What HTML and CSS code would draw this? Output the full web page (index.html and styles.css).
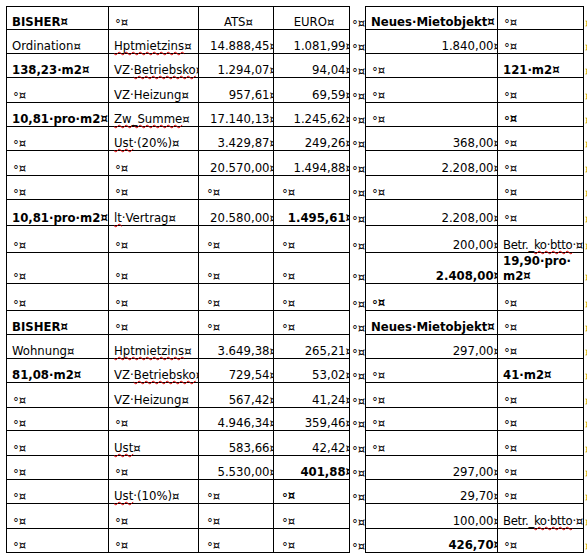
FILE: index.html
```html
<!DOCTYPE html>
<html lang="de">
<head>
<meta charset="utf-8">
<title>Mietvergleich</title>
<link rel="stylesheet" href="styles.css">
</head>
<body>
<table class="grid">
<colgroup>
<col class="c1"><col class="c2"><col class="c3"><col class="c4"><col class="c5"><col class="c6"><col class="c7"><col class="c8">
</colgroup>
<tbody>
<tr class="h23">
<td class="b">BISHER<span class="m">¤</span></td>
<td><span class="e">°</span><span class="m">¤</span></td>
<td class="c">ATS<span class="m">¤</span></td>
<td class="c">EURO<span class="m">¤</span></td>
<td class="n"><span class="e">°</span><span class="m">¤</span></td>
<td class="b">Neues·Mietobjekt<span class="m">¤</span></td>
<td><span class="e">°</span><span class="m">¤</span></td>
<td class="x">¤</td>
</tr>
<tr class="h24">
<td>Ordination<span class="m">¤</span></td>
<td><span class="sp">Hptmietzins</span><span class="m">¤</span></td>
<td class="r">14.888,45<span class="m">¤</span></td>
<td class="r">1.081,99<span class="m">¤</span></td>
<td class="n"><span class="e">°</span><span class="m">¤</span></td>
<td class="r">1.840,00<span class="m">¤</span></td>
<td><span class="e">°</span><span class="m">¤</span></td>
<td class="x">¤</td>
</tr>
<tr class="h24">
<td class="b">138,23·m2<span class="m">¤</span></td>
<td>VZ·<span class="sp">Betriebsko</span><span class="m">¤</span></td>
<td class="r">1.294,07<span class="m">¤</span></td>
<td class="r">94,04<span class="m">¤</span></td>
<td class="n"><span class="e">°</span><span class="m">¤</span></td>
<td><span class="e">°</span><span class="m">¤</span></td>
<td class="b">121·m2<span class="m">¤</span></td>
<td class="x">¤</td>
</tr>
<tr class="h25">
<td><span class="e">°</span><span class="m">¤</span></td>
<td>VZ·Heizung<span class="m">¤</span></td>
<td class="r">957,61<span class="m">¤</span></td>
<td class="r">69,59<span class="m">¤</span></td>
<td class="n"><span class="e">°</span><span class="m">¤</span></td>
<td><span class="e">°</span><span class="m">¤</span></td>
<td><span class="e">°</span><span class="m">¤</span></td>
<td class="x">¤</td>
</tr>
<tr class="h24">
<td class="b">10,81·pro·m2<span class="m">¤</span></td>
<td><span class="sp">Zw_Summe</span><span class="m">¤</span></td>
<td class="r">17.140,13<span class="m">¤</span></td>
<td class="r">1.245,62<span class="m">¤</span></td>
<td class="n"><span class="e">°</span><span class="m">¤</span></td>
<td><span class="e">°</span><span class="m">¤</span></td>
<td class="b"><span class="e">°</span><span class="m">¤</span></td>
<td class="x">¤</td>
</tr>
<tr class="h24">
<td><span class="e">°</span><span class="m">¤</span></td>
<td><span class="sp">Ust</span>·(20%)<span class="m">¤</span></td>
<td class="r">3.429,87<span class="m">¤</span></td>
<td class="r">249,26<span class="m">¤</span></td>
<td class="n"><span class="e">°</span><span class="m">¤</span></td>
<td class="r">368,00<span class="m">¤</span></td>
<td><span class="e">°</span><span class="m">¤</span></td>
<td class="x">¤</td>
</tr>
<tr class="h25">
<td><span class="e">°</span><span class="m">¤</span></td>
<td><span class="e">°</span><span class="m">¤</span></td>
<td class="r">20.570,00<span class="m">¤</span></td>
<td class="r">1.494,88<span class="m">¤</span></td>
<td class="n"><span class="e">°</span><span class="m">¤</span></td>
<td class="r">2.208,00<span class="m">¤</span></td>
<td><span class="e">°</span><span class="m">¤</span></td>
<td class="x">¤</td>
</tr>
<tr class="h24">
<td><span class="e">°</span><span class="m">¤</span></td>
<td><span class="e">°</span><span class="m">¤</span></td>
<td class="p"><span class="e">°</span><span class="m">¤</span></td>
<td class="p"><span class="e">°</span><span class="m">¤</span></td>
<td class="n"><span class="e">°</span><span class="m">¤</span></td>
<td><span class="e">°</span><span class="m">¤</span></td>
<td><span class="e">°</span><span class="m">¤</span></td>
<td class="x">¤</td>
</tr>
<tr class="h26">
<td class="b">10,81·pro·m2<span class="m">¤</span></td>
<td><span class="sp">lt</span>·Vertrag<span class="m">¤</span></td>
<td class="r">20.580,00<span class="m">¤</span></td>
<td class="r b">1.495,61<span class="m">¤</span></td>
<td class="n"><span class="e">°</span><span class="m">¤</span></td>
<td class="r">2.208,00<span class="m">¤</span></td>
<td><span class="e">°</span><span class="m">¤</span></td>
<td class="x">¤</td>
</tr>
<tr class="h27">
<td><span class="e">°</span><span class="m">¤</span></td>
<td><span class="e">°</span><span class="m">¤</span></td>
<td class="p"><span class="e">°</span><span class="m">¤</span></td>
<td class="p"><span class="e">°</span><span class="m">¤</span></td>
<td class="n"><span class="e">°</span><span class="m">¤</span></td>
<td class="r">200,00<span class="m">¤</span></td>
<td class="t">Betr._<span class="sp">ko·btto</span>·<span class="m">¤</span></td>
<td class="x">¤</td>
</tr>
<tr class="h30">
<td><span class="e">°</span><span class="m">¤</span></td>
<td><span class="e">°</span><span class="m">¤</span></td>
<td class="p"><span class="e">°</span><span class="m">¤</span></td>
<td class="p"><span class="e">°</span><span class="m">¤</span></td>
<td class="n"><span class="e">°</span><span class="m">¤</span></td>
<td class="r b">2.408,00<span class="m">¤</span></td>
<td class="b wrap">19,90·pro· m2<span class="m">¤</span></td>
<td class="x">¤</td>
</tr>
<tr class="h27">
<td><span class="e">°</span><span class="m">¤</span></td>
<td><span class="e">°</span><span class="m">¤</span></td>
<td class="p"><span class="e">°</span><span class="m">¤</span></td>
<td class="p"><span class="e">°</span><span class="m">¤</span></td>
<td class="n"><span class="e">°</span><span class="m">¤</span></td>
<td class="b"><span class="e">°</span><span class="m">¤</span></td>
<td><span class="e">°</span><span class="m">¤</span></td>
<td class="x">¤</td>
</tr>
<tr class="h24">
<td class="b">BISHER<span class="m">¤</span></td>
<td><span class="e">°</span><span class="m">¤</span></td>
<td class="p"><span class="e">°</span><span class="m">¤</span></td>
<td class="p"><span class="e">°</span><span class="m">¤</span></td>
<td class="n"><span class="e">°</span><span class="m">¤</span></td>
<td class="b">Neues·Mietobjekt<span class="m">¤</span></td>
<td><span class="e">°</span><span class="m">¤</span></td>
<td class="x">¤</td>
</tr>
<tr class="h24">
<td>Wohnung<span class="m">¤</span></td>
<td><span class="sp">Hptmietzins</span><span class="m">¤</span></td>
<td class="r">3.649,38<span class="m">¤</span></td>
<td class="r">265,21<span class="m">¤</span></td>
<td class="n"><span class="e">°</span><span class="m">¤</span></td>
<td class="r">297,00<span class="m">¤</span></td>
<td><span class="e">°</span><span class="m">¤</span></td>
<td class="x">¤</td>
</tr>
<tr class="h24">
<td class="b">81,08·m2<span class="m">¤</span></td>
<td>VZ·<span class="sp">Betriebsko</span><span class="m">¤</span></td>
<td class="r">729,54<span class="m">¤</span></td>
<td class="r">53,02<span class="m">¤</span></td>
<td class="n"><span class="e">°</span><span class="m">¤</span></td>
<td><span class="e">°</span><span class="m">¤</span></td>
<td class="b">41·m2<span class="m">¤</span></td>
<td class="x">¤</td>
</tr>
<tr class="h25">
<td><span class="e">°</span><span class="m">¤</span></td>
<td>VZ·Heizung<span class="m">¤</span></td>
<td class="r">567,42<span class="m">¤</span></td>
<td class="r">41,24<span class="m">¤</span></td>
<td class="n"><span class="e">°</span><span class="m">¤</span></td>
<td><span class="e">°</span><span class="m">¤</span></td>
<td><span class="e">°</span><span class="m">¤</span></td>
<td class="x">¤</td>
</tr>
<tr class="h23">
<td><span class="e">°</span><span class="m">¤</span></td>
<td><span class="e">°</span><span class="m">¤</span></td>
<td class="r">4.946,34<span class="m">¤</span></td>
<td class="r">359,46<span class="m">¤</span></td>
<td class="n"><span class="e">°</span><span class="m">¤</span></td>
<td><span class="e">°</span><span class="m">¤</span></td>
<td><span class="e">°</span><span class="m">¤</span></td>
<td class="x">¤</td>
</tr>
<tr class="h25">
<td><span class="e">°</span><span class="m">¤</span></td>
<td><span class="sp">Ust</span><span class="m">¤</span></td>
<td class="r">583,66<span class="m">¤</span></td>
<td class="r">42,42<span class="m">¤</span></td>
<td class="n"><span class="e">°</span><span class="m">¤</span></td>
<td><span class="e">°</span><span class="m">¤</span></td>
<td><span class="e">°</span><span class="m">¤</span></td>
<td class="x">¤</td>
</tr>
<tr class="h24">
<td><span class="e">°</span><span class="m">¤</span></td>
<td><span class="e">°</span><span class="m">¤</span></td>
<td class="r">5.530,00<span class="m">¤</span></td>
<td class="r b">401,88<span class="m">¤</span></td>
<td class="n"><span class="e">°</span><span class="m">¤</span></td>
<td class="r">297,00<span class="m">¤</span></td>
<td><span class="e">°</span><span class="m">¤</span></td>
<td class="x">¤</td>
</tr>
<tr class="h24">
<td><span class="e">°</span><span class="m">¤</span></td>
<td><span class="sp">Ust</span>·(10%)<span class="m">¤</span></td>
<td class="p"><span class="e">°</span><span class="m">¤</span></td>
<td class="p b"><span class="e">°</span><span class="m">¤</span></td>
<td class="n"><span class="e">°</span><span class="m">¤</span></td>
<td class="r">29,70<span class="m">¤</span></td>
<td><span class="e">°</span><span class="m">¤</span></td>
<td class="x">¤</td>
</tr>
<tr class="h25">
<td><span class="e">°</span><span class="m">¤</span></td>
<td><span class="e">°</span><span class="m">¤</span></td>
<td class="p"><span class="e">°</span><span class="m">¤</span></td>
<td class="p"><span class="e">°</span><span class="m">¤</span></td>
<td class="n"><span class="e">°</span><span class="m">¤</span></td>
<td class="r">100,00<span class="m">¤</span></td>
<td class="t">Betr._<span class="sp">ko·btto</span>·<span class="m">¤</span></td>
<td class="x">¤</td>
</tr>
<tr class="h24">
<td><span class="e">°</span><span class="m">¤</span></td>
<td><span class="e">°</span><span class="m">¤</span></td>
<td class="p"><span class="e">°</span><span class="m">¤</span></td>
<td class="p"><span class="e">°</span><span class="m">¤</span></td>
<td class="n"><span class="e">°</span><span class="m">¤</span></td>
<td class="r b">426,70<span class="m">¤</span></td>
<td><span class="e">°</span><span class="m">¤</span></td>
<td class="x">¤</td>
</tr>
</tbody>
</table>
</body>
</html>
```
FILE: styles.css
```css
html, body {
  margin: 0;
  padding: 0;
  background: #ffffff;
  overflow: hidden;
}
body {
  padding: 6px 0 0 6px;
  font-family: "DejaVu Sans Condensed", "DejaVu Sans", sans-serif;
  font-stretch: condensed;
  font-size: 13px;
  line-height: 15px;
  color: #000000;
}
.grid {
  border-collapse: collapse;
  table-layout: fixed;
  width: 583px;
}
.c1 { width: 102px; }
.c2 { width: 90px; }
.c3 { width: 75px; }
.c4 { width: 76px; }
.c5 { width: 16px; }
.c6 { width: 132px; }
.c7 { width: 86px; }
.c8 { width: 6px; }
.grid td {
  border: 1px solid #000000;
  padding: 0 0 0 5px;
  vertical-align: bottom;
  white-space: nowrap;
  overflow-x: clip;
  overflow-y: visible;
  text-align: left;
}
.grid td.p { padding-left: 7px; }
.grid td.r { text-align: right; padding-left: 2px; }
.grid td.c { text-align: center; padding-left: 2px; }
.grid td.b { font-weight: bold; }
.grid td.t { letter-spacing: -0.35px; }
.grid td.n {
  border-top: none;
  border-bottom: none;
  padding-left: 1px;
}
.grid td.x {
  border: none;
  padding-left: 1px;
  color: #c0a800;
}
.grid td.wrap { white-space: normal; }
.e {
  padding-left: 1px;
  line-height: 0;
  vertical-align: -2px;
}
.m { margin-right: -3px; }
.r .m { margin-right: -4px; }
.sp {
  text-decoration-line: underline;
  text-decoration-style: wavy;
  text-decoration-color: #e00000;
  text-decoration-thickness: 1px;
  text-underline-offset: 1px;
  text-decoration-skip-ink: none;
}
.h23 { height: 23px; }
.h24 { height: 24px; }
.h25 { height: 25px; }
.h26 { height: 26px; }
.h27 { height: 27px; }
.h30 { height: 30px; }
```
